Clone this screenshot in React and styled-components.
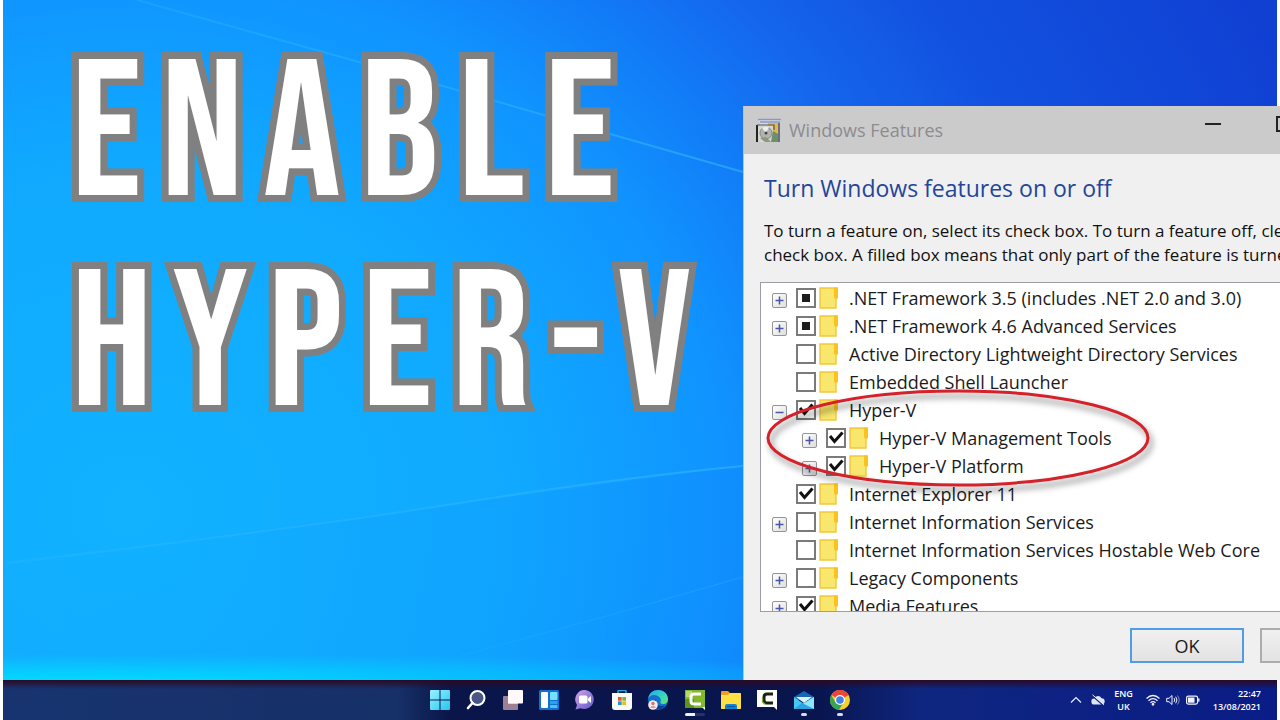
import React, { useEffect, useRef, useState } from 'react'
import styled, { createGlobalStyle } from 'styled-components'

const features = [
  { name: '.NET Framework 3.5 (includes .NET 2.0 and 3.0)', node: 'plus', state: 'mixed' },
  { name: '.NET Framework 4.6 Advanced Services', node: 'plus', state: 'mixed' },
  { name: 'Active Directory Lightweight Directory Services', state: 'off' },
  { name: 'Embedded Shell Launcher', state: 'off' },
  { name: 'Hyper-V', node: 'minus', state: 'on' },
  { name: 'Hyper-V Management Tools', node: 'plus', state: 'on', child: true },
  { name: 'Hyper-V Platform', node: 'plus', state: 'on', child: true },
  { name: 'Internet Explorer 11', state: 'on' },
  { name: 'Internet Information Services', node: 'plus', state: 'off' },
  { name: 'Internet Information Services Hostable Web Core', state: 'off' },
  { name: 'Legacy Components', node: 'plus', state: 'off' },
  { name: 'Media Features', node: 'plus', state: 'on' },
]

function FolderIcon() {
  return (
    <svg width="20" height="22" viewBox="0 0 20 22" aria-hidden="true">
      <path d="M1 1h17v10l-1 1v9H1z" fill="#f9e66d" stroke="#f3c73a" strokeWidth="1.4" />
      <path d="M15 .5H19v10l-2 1.500-2-1.500z" fill="#fbc21f" />
    </svg>
  )
}

function FeatureRow({ feature }) {
  const [checked, setChecked] = useState(feature.state === 'on')
  const box = useRef(null)

  useEffect(() => {
    box.current.indeterminate = feature.state === 'mixed'
  }, [feature.state])

  return (
    <Row $child={feature.child}>
      {feature.node ? (
        <Expander type="button" aria-label={feature.name}>
          <svg width="13" height="13" viewBox="0 0 13 13">
            <path d={feature.node === 'plus' ? 'M2.500 6.500h8M6.500 2.500v8' : 'M2.500 6.500h8'} stroke="#4657a8" strokeWidth="1.500" />
          </svg>
        </Expander>
      ) : <NoExpander />}
      <FeatureLabel>
        <CheckWrap>
          <Check ref={box} type="checkbox" checked={checked} onChange={() => setChecked(!checked)} />
          <svg viewBox="0 0 20 20" width="20" height="20" aria-hidden="true">
            {feature.state === 'mixed' && <rect x="6" y="6" width="8" height="8" fill="#1c1c1c" />}
            {feature.state !== 'mixed' && checked && (
              <path d="M4 8L8.500 13.500 16.500 4.500" fill="none" stroke="#111" strokeWidth="3" />
            )}
          </svg>
        </CheckWrap>
        <FolderIcon />
        <FeatureName>{feature.name}</FeatureName>
      </FeatureLabel>
    </Row>
  )
}

function ProgramIcon() {
  return (
    <svg width="25" height="25" viewBox="0 0 25 25" aria-hidden="true">
      <path d="M2 1h23l-2 3v20H4V5z" fill="#d5d9e6" />
      <path d="M2 1.500h23M4 4h20" stroke="#8d97c4" strokeWidth="1.500" />
      <path d="M12 5h10v13H12z" fill="#e9b93c" />
      <path d="M1.500 7.500h15.500v15.500H1.500z" fill="#d4d6cf" />
      <path d="M1 24V7" fill="none" stroke="#222" strokeWidth="2" />
      <path d="M1 7h17v5" fill="none" stroke="#555" strokeWidth="1.200" />
      <path d="M17 13l7 4v7h-9z" fill="#6f8f66" />
      <circle cx="10" cy="15" r="6" fill="#b0b3b0" stroke="#85898a" />
      <path d="M10 15L6 10a6 6 0 0 1 7-1z" fill="#ecefec" />
      <circle cx="10" cy="15" r="1.500" fill="#444" />
      <path d="M22 5h2v19h-2z" fill="#6b6f84" />
      <path d="M4 20l5 4h6l-5-5z" fill="#8a9a78" />
    </svg>
  )
}

function Wallpaper() {
  return (
    <Rays viewBox="0 0 1274 680" preserveAspectRatio="none" aria-hidden="true">
      <defs>
        <linearGradient id="beam" x1="0" x2="1" y1="0" y2="0">
          <stop offset="0" stopColor="#35bcff" stopOpacity=".25" />
          <stop offset="1" stopColor="#35b4ff" stopOpacity=".6" />
        </linearGradient>
        <linearGradient id="floor" x1="0" x2="1" y1="0" y2="0">
          <stop offset="0" stopColor="#0b8cff" stopOpacity="0" />
          <stop offset="1" stopColor="#0b7dfa" stopOpacity=".2" />
        </linearGradient>
      </defs>
      <path d="M0 563Q370 515 740 466V680H0z" fill="url(#floor)" />
      <path d="M134 0L356 62 740 172" fill="none" stroke="url(#beam)" strokeWidth="2" />
      <path d="M4 563Q300 528 457 503T740 466" fill="none" stroke="url(#beam)" strokeWidth="2" />
      <path d="M457 656Q600 618 740 577" fill="none" stroke="url(#beam)" strokeWidth="1" opacity=".6" />
    </Rays>
  )
}

const apps = [
  {
    name: 'Start',
    art: (
      <>
        <defs>
          <linearGradient id="start" x1="0" y1="0" x2="1" y2="1">
            <stop offset="0" stopColor="#9af2ff" />
            <stop offset="1" stopColor="#23c6f0" />
          </linearGradient>
        </defs>
        <path d="M0 1q0-1 1-1h8.500v9.500H0zM10.500 0H19q1 0 1 1v8.500h-9.500zM0 10.500h9.500V20H1q-1 0-1-1zM10.500 10.500H20V19q0 1-1 1h-8.500z" fill="url(#start)" />
      </>
    ),
  },
  {
    name: 'Search',
    art: (
      <>
        <circle cx="11.500" cy="8" r="7" fill="#4a5684" stroke="#fff" strokeWidth="2" />
        <path d="M6.500 13L2 18" stroke="#fff" strokeWidth="2.600" strokeLinecap="round" />
      </>
    ),
  },
  {
    name: 'Task view',
    art: (
      <>
        <rect x="0" y="6" width="15" height="14" rx="1" fill="#9c8094" />
        <path d="M5 6h10v8H5z" fill="#c9b3c2" />
        <rect x="5" y="0" width="15" height="13.500" rx="1" fill="#fff8fa" />
      </>
    ),
  },
  {
    name: 'Widgets',
    art: (
      <>
        <rect width="20" height="20" rx="1.500" fill="#1470cf" />
        <rect x="2" y="2" width="7" height="16" rx="1" fill="#fff" />
        <rect x="11" y="2" width="7.500" height="8" rx="1" fill="#75e0ff" />
        <rect x="11" y="11" width="7.500" height="3" fill="#27a4e8" />
        <rect x="11" y="15" width="7.500" height="3" rx="1" fill="#49c6f8" />
      </>
    ),
  },
  {
    name: 'Chat',
    art: (
      <>
        <defs>
          <linearGradient id="chat" x1="0" y1="0" x2="1" y2="1">
            <stop offset="0" stopColor="#d7a4e4" />
            <stop offset="1" stopColor="#5b58cf" />
          </linearGradient>
        </defs>
        <path d="M10 0a9.500 9.500 0 1 1-4.500 18.200L.5 19.500 2 15A9.500 9.500 0 0 1 10 0z" fill="url(#chat)" />
        <rect x="4" y="5.500" width="8.500" height="8" rx="1.500" fill="#fff" />
        <path d="M13 8.500l3-2.500v7l-3-2.500z" fill="#fff" />
      </>
    ),
  },
  {
    name: 'Microsoft Store',
    art: (
      <>
        <path d="M6 3V1.200q0-.7.700-.7h6.600q.7 0 .7.700V3" fill="none" stroke="#27a9d6" strokeWidth="1.500" />
        <path d="M0 3h20v14q0 3-3 3H3q-3 0-3-3z" fill="#fbfaf6" />
        <path d="M6 7h3.700v3.700H6z" fill="#e8532c" />
        <path d="M10.300 7H14v3.700h-3.700z" fill="#80b92c" />
        <path d="M6 11.300h3.700V15H6z" fill="#2498d6" />
        <path d="M10.300 11.300H14V15h-3.700z" fill="#f4b71c" />
      </>
    ),
  },
  {
    name: 'Edge',
    art: (
      <>
        <defs>
          <linearGradient id="edge" x1="0" y1="0" x2="1" y2="1">
            <stop offset="0" stopColor="#25a6ee" />
            <stop offset=".6" stopColor="#38d8ba" />
            <stop offset="1" stopColor="#6ce06c" />
          </linearGradient>
        </defs>
        <circle cx="10" cy="10" r="10" fill="#1372cd" />
        <path d="M0 9C1 3 5 0 10 0c6 0 10 4 10 9 0 3-2 5-5 5-2 0-3-1-2.500-2C14 8 10 5 6 5 3 5 1 7 0 9z" fill="url(#edge)" />
        <path d="M8 9c-1 5 3 8 9 6.500-1 2-4 4.500-8 4-4-2-4-8-1-10.500z" fill="#0b3d94" />
        <circle cx="5" cy="15" r="4.800" fill="#f5e9ea" />
        <circle cx="5" cy="13.500" r="1.700" fill="#c97b78" />
        <path d="M2 18q3-4.500 6 0z" fill="#d99b98" />
      </>
    ),
  },
  {
    name: 'Camtasia',
    running: 'active',
    art: (
      <>
        <path d="M0 0h20v20l-2-2H0z" fill="#82b82a" />
        <path d="M0 9h9v9H0z" fill="#5b9619" />
        <path d="M1 1h6v6H1z" fill="#b6db62" />
        <path d="M16 4H9Q6 4 6 7v4q0 3 3 3h7" fill="none" stroke="#fff" strokeWidth="3" />
        <path d="M17 17h3v3z" fill="#f3f6dc" />
      </>
    ),
  },
  {
    name: 'File Explorer',
    art: (
      <>
        <path d="M0 2q0-1 1-1h6l2 2h10q1 0 1 1v14q0 1-1 1H1q-1 0-1-1z" fill="#eda21d" />
        <path d="M0 5h7l2-2h10q1 0 1 1v14q0 1-1 1H1q-1 0-1-1z" fill="#ffe144" />
        <path d="M4 19v-3q0-2 2-2h8q2 0 2 2v3z" fill="#1583d4" />
        <path d="M6 16.500h8" stroke="#075aa5" strokeWidth="1.200" />
      </>
    ),
  },
  {
    name: 'Camtasia Recorder',
    art: (
      <>
        <path d="M0 0h20v20l-3-3H0z" fill="#fdfdfb" />
        <path d="M16 4h-6Q7 4 7 7v3q0 3 3 3h6" fill="none" stroke="#182316" strokeWidth="3" />
        <path d="M5.500 7v5l3 2.500" fill="none" stroke="#79ad2f" strokeWidth="1.200" />
      </>
    ),
  },
  {
    name: 'Mail',
    running: 'idle',
    art: (
      <>
        <path d="M0 7l10-6 10 6v3H0z" fill="#1766b7" />
        <path d="M0 7l10 7 10-7v12H0z" fill="#46c8f2" />
        <path d="M0 19L20 7v12z" fill="#8ae9fc" />
        <path d="M0 19l8-6 12 6z" fill="#29a3e4" />
        <path d="M2 7h16l-8 6z" fill="#d9f4fb" />
      </>
    ),
  },
  {
    name: 'Chrome',
    running: 'idle',
    art: (
      <>
        <circle cx="10" cy="10" r="10" fill="#f8cf2c" />
        <path d="M10 10L1.300 5A10 10 0 0 1 18.700 5z" fill="#e9493c" />
        <path d="M1.300 5A10 10 0 0 0 9 20l4-7-7.500-.5z" fill="#35a457" />
        <circle cx="10" cy="10" r="5" fill="#fff" />
        <circle cx="10" cy="10" r="3.800" fill="#3e82ec" />
      </>
    ),
  },
]

function Taskbar() {
  return (
    <Bar>
      <Apps>
        {apps.map((app) => (
          <AppButton key={app.name} type="button" aria-label={app.name} $running={app.running}>
            <svg width="20" height="20" viewBox="0 0 20 20">{app.art}</svg>
          </AppButton>
        ))}
      </Apps>
      <Tray>
        <TrayButton type="button" aria-label="Show hidden icons">
          <svg width="12" height="12" viewBox="0 0 12 12" fill="none" stroke="#e8ecf8">
            <path d="M1 8.500l5-5 5 5" strokeWidth="1.200" />
          </svg>
        </TrayButton>
        <TrayButton type="button" aria-label="OneDrive">
          <svg width="14" height="12" viewBox="0 0 14 12">
            <path d="M3.500 10.500a3 3 0 0 1-.3-6 4 4 0 0 1 7.300-.2 3.100 3.100 0 0 1 .2 6.200z" fill="#dfe4f6" />
            <path d="M1 1.500l12 10.500" stroke="#12297c" strokeWidth="1.500" />
            <path d="M1.500 .8L13 10.800" stroke="#e8ecf8" strokeWidth="1" />
          </svg>
        </TrayButton>
        <TrayText $align="center">
          <span>ENG</span>
          <span>UK</span>
        </TrayText>
        <Status>
          <svg width="14" height="12" viewBox="0 0 14 12" fill="none" stroke="#f0f3fc" strokeWidth="1.200">
            <path d="M.5 4.500q6.500-6 13 0M2.500 6.700q4.500-4.200 9 0M4.500 8.700q2.500-2.200 5 0" />
            <circle cx="7" cy="10.300" r=".8" fill="#f0f3fc" />
          </svg>
          <svg width="14" height="12" viewBox="0 0 14 12" fill="none" stroke="#f0f3fc">
            <path d="M.7 4.300H3l3-2.800v9L3 7.700H.7z" />
            <path d="M8 4q1.500 2 0 4M9.700 2.700q2.500 3.300 0 6.600" />
            <path d="M11.500 1.500q3.300 4.500 0 9" opacity=".5" />
          </svg>
          <svg width="14" height="12" viewBox="0 0 14 12">
            <rect x=".6" y="2.100" width="11" height="8" rx="1.800" fill="none" stroke="#f0f3fc" strokeWidth="1.200" />
            <rect x="2" y="3.500" width="6.500" height="5.200" fill="#f0f3fc" />
            <path d="M12.800 4.600v3" stroke="#f0f3fc" strokeWidth="1.400" />
          </svg>
        </Status>
        <TrayText $align="flex-end">
          <span>22:47</span>
          <span>13/08/2021</span>
        </TrayText>
      </Tray>
    </Bar>
  )
}

function FeaturesWindow() {
  return (
    <Window>
      <TitleBar>
        <ProgramIcon />
        <Title>Windows Features</Title>
        <Caption type="button" aria-label="Minimize">
          <svg width="16" height="16" viewBox="0 0 16 16"><path d="M0 8h16" stroke="#222" strokeWidth="2" /></svg>
        </Caption>
        <Caption type="button" aria-label="Maximize">
          <svg width="16" height="16" viewBox="0 0 16 16"><path d="M1 1h14v14H1z" fill="none" stroke="#222" strokeWidth="2" /></svg>
        </Caption>
        <Caption type="button" aria-label="Close" />
      </TitleBar>
      <Body>
        <Heading>Turn Windows features on or off</Heading>
        <Help>
          To turn a feature on, select its check box. To turn a feature off, clear its<br />
          check box. A filled box means that only part of the feature is turned on.
        </Help>
        <ListArea>
          <List>
            {features.map((feature) => <FeatureRow key={feature.name} feature={feature} />)}
          </List>
          <Highlight viewBox="0 0 400 120" aria-hidden="true">
            <ellipse cx="199" cy="57" rx="190" ry="47" fill="none" stroke="#d5222a" strokeWidth="3" />
          </Highlight>
        </ListArea>
        <Actions>
          <DialogButton type="button" $primary>OK</DialogButton>
          <DialogButton type="button" aria-label="Cancel" />
        </Actions>
      </Body>
    </Window>
  )
}

function App() {
  return (
    <Screen>
      <GlobalStyle />
      <Desktop>
        <Wallpaper />
        <Headline>Enable<br />Hyper-V</Headline>
        <FeaturesWindow />
      </Desktop>
      <Taskbar />
    </Screen>
  )
}

export default App

const GlobalStyle = createGlobalStyle`
  *{
    box-sizing: border-box;
  }
  body{
    margin: 0;
    background: #fff;
    font-family: "Open Sans", "Noto Sans", sans-serif;
  }
  button{
    font: inherit;
    padding: 0;
    border: 0;
    background: none;
  }
  svg{
    display: block;
    flex-shrink: 0;
  }
`

const Screen = styled.div`
  min-height: 100vh;
  padding: 0 3px;
  display: flex;
  flex-direction: column;
  overflow: hidden;
`

const Desktop = styled.main`
  position: relative;
  flex: 1;
  background:
    radial-gradient(860px 26px at 10% 100%, #00dcff, #00dcff00),
    radial-gradient(1100px 1000px at 10% 75%, #12b2ff 0%, #10a9ff 35%, #1094ff 54%, #1278f6 67%, #1566ec 75%, #1252e0 88%, #103fd2 115%);
`

const Rays = styled.svg`
  position: absolute;
  inset: 0;
  width: 100%;
  height: 100%;
`

const Headline = styled.h1`
  position: relative;
  margin: 0;
  padding: 32px 0 0 68px;
  font-family: "Bebas Neue", "Roboto Condensed", "Liberation Sans Narrow", sans-serif;
  font-size: 194px;
  line-height: 210px;
  font-weight: 400;
  letter-spacing: .1em;
  text-transform: uppercase;
  white-space: nowrap;
  color: #fff;
  -webkit-text-stroke: 14px #808080;
  paint-order: stroke fill;
`

const Window = styled.section`
  position: absolute;
  top: 106px;
  bottom: 0;
  left: 740px;
  right: -113px;
  display: flex;
  flex-direction: column;
  background: #f0f0f0;
  border-left: 1px solid #b9c4d6;
  white-space: nowrap;
`

const TitleBar = styled.header`
  height: 48px;
  padding: 0 4px 0 12px;
  display: flex;
  align-items: center;
  gap: 8px;
  background: #cbcbcb;
  color: #8b8b90;
`

const Title = styled.span`
  flex: 1;
  font-size: 18px;
`

const Caption = styled.button`
  width: 63px;
  height: 36px;
  align-self: flex-start;
  display: grid;
  place-items: center;
`

const Body = styled.div`
  flex: 1;
  min-height: 0;
  padding: 17px 16px;
  display: flex;
  flex-direction: column;
`

const Heading = styled.h2`
  margin: 0 4px 14px;
  font-size: 23px;
  line-height: 34px;
  font-weight: 400;
  color: #24459c;
`

const Help = styled.p`
  margin: 0 4px 15px;
  font-size: 17px;
  line-height: 24px;
  color: #111;
`

const ListArea = styled.div`
  position: relative;
  flex: 1;
  min-height: 0;
  display: flex;
`

const List = styled.ul`
  flex: 1;
  margin: 0;
  padding: 1px 0 0 11px;
  list-style: none;
  overflow: hidden;
  background: #fff;
  border: 1px solid #9a9da3;
`

const Row = styled.li`
  height: 28px;
  padding-left: ${props => props.$child ? '30px' : '0'};
  display: flex;
  align-items: center;
  gap: 9px;
`

const Expander = styled.button`
  width: 15px;
  height: 15px;
  margin-top: 4px;
  flex-shrink: 0;
  border: 1px solid #949494;
  border-radius: 2px;
  background: linear-gradient(135deg, #fff, #dedede);
`

const NoExpander = styled.span`
  width: 15px;
`

const FeatureLabel = styled.label`
  display: flex;
  align-items: center;
`

const CheckWrap = styled.span`
  display: grid;
  margin-right: 3px;
  > *{
    grid-area: 1 / 1;
  }
  svg{
    pointer-events: none;
  }
`

const Check = styled.input`
  appearance: none;
  width: 20px;
  height: 20px;
  margin: 0;
  background: #fff;
  border: 2px solid #7a7a7a;
`

const FeatureName = styled.span`
  margin-left: 10px;
  font-size: 18px;
  line-height: 28px;
  color: #1b1b1b;
`

const Highlight = styled.svg`
  position: absolute;
  top: 99px;
  left: -1px;
  width: 400px;
  height: 120px;
  pointer-events: none;
  filter: drop-shadow(3px 5px 3px rgba(0, 0, 0, .5));
`

const Actions = styled.footer`
  margin-top: 16px;
  display: flex;
  justify-content: flex-end;
  gap: 16px;
`

const DialogButton = styled.button`
  && {
    width: 114px;
    height: 35px;
    border: 2px solid ${props => props.$primary ? '#4f9de8' : '#acacac'};
    background: linear-gradient(#f0f0f0, #e3e3e3);
    font-size: 18px;
    color: #1b1b1b;
  }
`

const Bar = styled.footer`
  height: 40px;
  display: grid;
  grid-template-columns: 1fr 33% 1fr;
  align-items: center;
  background:
    linear-gradient(#2a0a24 0, #2a0a2400 9px),
    linear-gradient(to right, #183470 0%, #163068 31%, #0a164a 35%, #08154e 64%, #0f2680 72%, #0a1c86 100%);
`

const Apps = styled.nav`
  grid-column: 2;
  display: flex;
  justify-content: space-between;
`

const AppButton = styled.button`
  position: relative;
  width: 20px;
  height: 20px;
  &::after{
    content: '';
    display: ${props => props.$running ? 'block' : 'none'};
    position: absolute;
    top: 23px;
    left: ${props => props.$running === 'active' ? '0' : '7px'};
    width: ${props => props.$running === 'active' ? '20px' : '6px'};
    height: 3px;
    border-radius: 2px;
    background: ${props => props.$running === 'active' ? 'linear-gradient(to right, #f3eefc 50%, #26326e 50%)' : '#e0d5ee'};
  }
`

const Tray = styled.div`
  padding-right: 16px;
  display: flex;
  align-items: center;
  justify-content: flex-end;
  gap: 13px;
  color: #fff;
`

const TrayButton = styled.button`
  margin-right: -4px;
`

const Status = styled.div`
  display: flex;
  gap: 6px;
`

const TrayText = styled.div`
  display: flex;
  flex-direction: column;
  align-items: ${props => props.$align};
  font-size: 9px;
  line-height: 13px;
  font-weight: 600;
`
